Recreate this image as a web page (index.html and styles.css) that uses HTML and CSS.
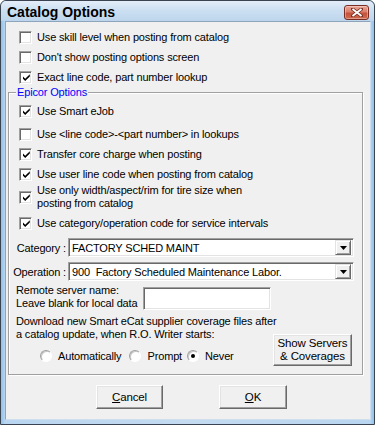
FILE: index.html
```html
<!DOCTYPE html>
<html>
<head>
<meta charset="utf-8">
<link rel="stylesheet" href="styles.css">
</head>
<body>
<div class="window">
  <div class="titlebar">
    <span class="title">Catalog Options</span>
    <span class="close">
      <svg width="12" height="9" viewBox="0 0 12 9"><path d="M1.5 1 L10.5 8 M10.5 1 L1.5 8" stroke="#7a3326" stroke-width="3.4" stroke-linecap="square" fill="none"/><path d="M1.5 1 L10.5 8 M10.5 1 L1.5 8" stroke="#fff" stroke-width="1.8" fill="none"/></svg>
    </span>
  </div>
  <div class="client">
    <div class="top-opts">
      <div class="chk"><span class="box"></span><span>Use skill level when posting from catalog</span></div>
      <div class="chk"><span class="box"></span><span>Don't show posting options screen</span></div>
      <div class="chk"><span class="box on"><svg width="9" height="9" viewBox="0 0 9 9"><path d="M1 3.5 L3.2 5.8 L7.8 1.2 L7.8 3.4 L3.2 8 L1 5.7 Z" fill="#000"/></svg></span><span>Exact line code, part number lookup</span></div>
    </div>
    <div class="group">
      <span class="legend">Epicor Options</span>
      <div class="chk g1"><span class="box on"><svg width="9" height="9" viewBox="0 0 9 9"><path d="M1 3.5 L3.2 5.8 L7.8 1.2 L7.8 3.4 L3.2 8 L1 5.7 Z" fill="#000"/></svg></span><span>Use Smart eJob</span></div>
      <div class="chk g2"><span class="box"></span><span>Use &lt;line code&gt;-&lt;part number&gt; in lookups</span></div>
      <div class="chk"><span class="box on"><svg width="9" height="9" viewBox="0 0 9 9"><path d="M1 3.5 L3.2 5.8 L7.8 1.2 L7.8 3.4 L3.2 8 L1 5.7 Z" fill="#000"/></svg></span><span>Transfer core charge when posting</span></div>
      <div class="chk"><span class="box on"><svg width="9" height="9" viewBox="0 0 9 9"><path d="M1 3.5 L3.2 5.8 L7.8 1.2 L7.8 3.4 L3.2 8 L1 5.7 Z" fill="#000"/></svg></span><span>Use user line code when posting from catalog</span></div>
      <div class="chk tall"><span class="box on"><svg width="9" height="9" viewBox="0 0 9 9"><path d="M1 3.5 L3.2 5.8 L7.8 1.2 L7.8 3.4 L3.2 8 L1 5.7 Z" fill="#000"/></svg></span><span>Use only width/aspect/rim for tire size when<br>posting from catalog</span></div>
      <div class="chk g6"><span class="box on"><svg width="9" height="9" viewBox="0 0 9 9"><path d="M1 3.5 L3.2 5.8 L7.8 1.2 L7.8 3.4 L3.2 8 L1 5.7 Z" fill="#000"/></svg></span><span>Use category/operation code for service intervals</span></div>

      <div class="combo-row">
        <span class="clabel">Category :</span>
        <div class="combo"><span class="val">FACTORY SCHED MAINT</span><span class="drop"><svg width="7" height="4" viewBox="0 0 7 4"><path d="M0 0 H7 L3.5 4 Z" fill="#000"/></svg></span></div>
      </div>
      <div class="combo-row">
        <span class="clabel">Operation :</span>
        <div class="combo"><span class="val">900&nbsp; Factory Scheduled Maintenance Labor.</span><span class="drop"><svg width="7" height="4" viewBox="0 0 7 4"><path d="M0 0 H7 L3.5 4 Z" fill="#000"/></svg></span></div>
      </div>

      <div class="remote">
        <div class="rtext">Remote server name:<br>Leave blank for local data</div>
        <div class="textbox"></div>
      </div>

      <div class="download">
        <div class="dl-left">
          <div class="dtext">Download new Smart eCat supplier coverage files after<br>a catalog update, when R.O. Writer starts:</div>
          <div class="radios">
            <span class="radio"><span class="dot"></span>Automatically</span>
            <span class="radio r2"><span class="dot"></span>Prompt</span>
            <span class="radio"><span class="dot sel"></span>Never</span>
          </div>
        </div>
        <div class="btn servers">Show Servers<br>&amp; Coverages</div>
      </div>
    </div>
    <div class="actions">
      <div class="btn act"><span><u>C</u>ancel</span></div>
      <div class="btn act ok"><span><u>O</u>K</span></div>
    </div>
  </div>
</div>
</body>
</html>
```
FILE: styles.css
```css
* { box-sizing: border-box; }
html, body { margin: 0; padding: 0; background: #fff; }
body {
  font-family: "Liberation Sans", Arial, sans-serif;
  font-size: 11px;
  letter-spacing: -0.15px;
  color: #000;
}
.window {
  width: 375px;
  height: 425px;
  border: 1px solid #3a4450;
  border-radius: 6px 6px 0 0;
  background: linear-gradient(to right, #8fc3ec 0, #b9d5ef 4px, #c4dbf0 50%, #b9d5ef calc(100% - 4px), #8fc3ec 100%);
  display: flex;
  flex-direction: column;
  padding: 0 3px 4px 3px;
  overflow: hidden;
}
.titlebar {
  height: 20px;
  margin: 0 -3px;
  padding: 0 5px 0 6px;
  background: linear-gradient(to bottom, #e4eef9 0, #cfe1f3 40%, #bdd5ec 100%);
  border-radius: 5px 5px 0 0;
  display: flex;
  align-items: center;
  justify-content: space-between;
}
.title {
  font-size: 14px;
  font-weight: bold;
  letter-spacing: 0;
  margin-top: 2px;
  color: #000;
}
.close {
  width: 25px;
  height: 15px;
  margin-top: 2px;
  border: 1px solid #7a2d22;
  border-radius: 3px;
  background: linear-gradient(to bottom, #eba597 0, #d9806c 45%, #c4533b 55%, #cf6a4f 100%);
  display: flex;
  align-items: center;
  justify-content: center;
  box-shadow: inset 0 0 0 1px rgba(255,255,255,0.35);
}
.client {
  flex: 1;
  margin-left: 1px;
  background: #f0f0f0;
  border: 1px solid #8ea4bb;
  border-bottom-color: #cfdfee;
  border-right-color: #cfdfee;
  display: flex;
  flex-direction: column;
}
.top-opts {
  padding: 5px 0 0 13px;
}
.chk {
  display: flex;
  align-items: center;
  height: 20px;
}
.chk.tall { height: 26px; line-height: 13px; }
.chk.g2 { margin-top: 3px; }
.chk.g6 { margin-top: 3px; }
.box {
  width: 13px;
  height: 13px;
  flex: none;
  margin-right: 5px;
  background: #fff;
  border: 1px solid;
  border-color: #a0a0a0 #fff #fff #a0a0a0;
  box-shadow: inset 1px 1px 0 #696969, inset -1px -1px 0 #e3e3e3;
  display: flex;
  align-items: center;
  justify-content: center;
}
.box svg { margin: 1px 0 0 1px; }
.group {
  position: relative;
  margin: 5px 7px 0 2px;
  border: 1px solid #a0a0a0;
  box-shadow: 1px 1px 0 #fff, inset 1px 1px 0 #fff;
  padding: 8px 0 8px 0;
}
.group > .chk { padding-left: 10px; }
.legend {
  position: absolute;
  top: -7px;
  left: 7px;
  padding: 0 1px;
  background: #f0f0f0;
  color: #0000ff;
  line-height: 13px;
}
.combo-row {
  display: flex;
  align-items: center;
  margin-top: 5px;
  height: 19px;
}
.clabel {
  width: 57px;
  text-align: right;
  margin-right: 2px;
  white-space: nowrap;
}
.combo {
  width: 286px;
  height: 19px;
  background: #fff;
  border: 1px solid;
  border-color: #a0a0a0 #fff #fff #a0a0a0;
  box-shadow: inset 1px 1px 0 #696969, inset -1px -1px 0 #e3e3e3;
  display: flex;
  align-items: center;
  padding: 0 2px 0 3px;
  justify-content: space-between;
}
.combo .val { white-space: nowrap; }
.drop {
  width: 16px;
  height: 15px;
  background: #f0f0f0;
  border: 1px solid;
  border-color: #e3e3e3 #696969 #696969 #e3e3e3;
  box-shadow: inset 1px 1px 0 #fff, inset -1px -1px 0 #a0a0a0;
  display: flex;
  align-items: center;
  justify-content: center;
}
.remote {
  display: flex;
  align-items: flex-end;
  margin-top: 3px;
  padding-left: 7px;
}
.rtext {
  line-height: 13px;
  width: 127px;
}
.textbox {
  width: 128px;
  height: 23px;
  background: #fff;
  border: 1px solid;
  border-color: #a0a0a0 #fff #fff #a0a0a0;
  box-shadow: inset 1px 1px 0 #696969, inset -1px -1px 0 #e3e3e3;
}
.download {
  display: flex;
  justify-content: space-between;
  align-items: flex-start;
  margin-top: 5px;
  padding: 0 10px 0 7px;
}
.dl-left {
  flex: 1;
  min-width: 0;
}
.dtext {
  line-height: 13px;
  white-space: nowrap;
}
.radios {
  display: flex;
  align-items: center;
  height: 16px;
  margin-top: 7px;
  padding-left: 24px;
}
.radio {
  display: flex;
  align-items: center;
  margin-right: 8px;
}
.radio.r2 { margin-right: 5px; }
.dot {
  width: 12px;
  height: 12px;
  border-radius: 50%;
  margin-right: 6px;
  background: #fff;
  border: 1px solid;
  border-color: #a0a0a0 #fff #fff #a0a0a0;
  box-shadow: inset 1px 1px 0 #c8c8c8;
  display: flex;
  align-items: center;
  justify-content: center;
}
.dot.sel::after {
  content: "";
  width: 4px;
  height: 4px;
  border-radius: 50%;
  background: #000;
}
.btn {
  background: #f0f0f0;
  border: 1px solid;
  border-color: #fff #696969 #696969 #fff;
  box-shadow: inset -1px -1px 0 #a0a0a0, inset 1px 1px 0 #e3e3e3;
  text-align: center;
  display: flex;
  align-items: center;
  justify-content: center;
}
.servers {
  flex: none;
  width: 79px;
  height: 32px;
  margin-top: 19px;
  line-height: 13px;
  font-size: 11.5px;
}
.actions {
  display: flex;
  justify-content: center;
  gap: 56px;
  margin-top: 10px;
  padding-left: 7px;
}
.act {
  width: 67px;
  height: 24px;
  font-size: 11.5px;
}
.act.ok { width: 68px; }
.act u { text-decoration: underline; text-underline-offset: 1px; }
```
